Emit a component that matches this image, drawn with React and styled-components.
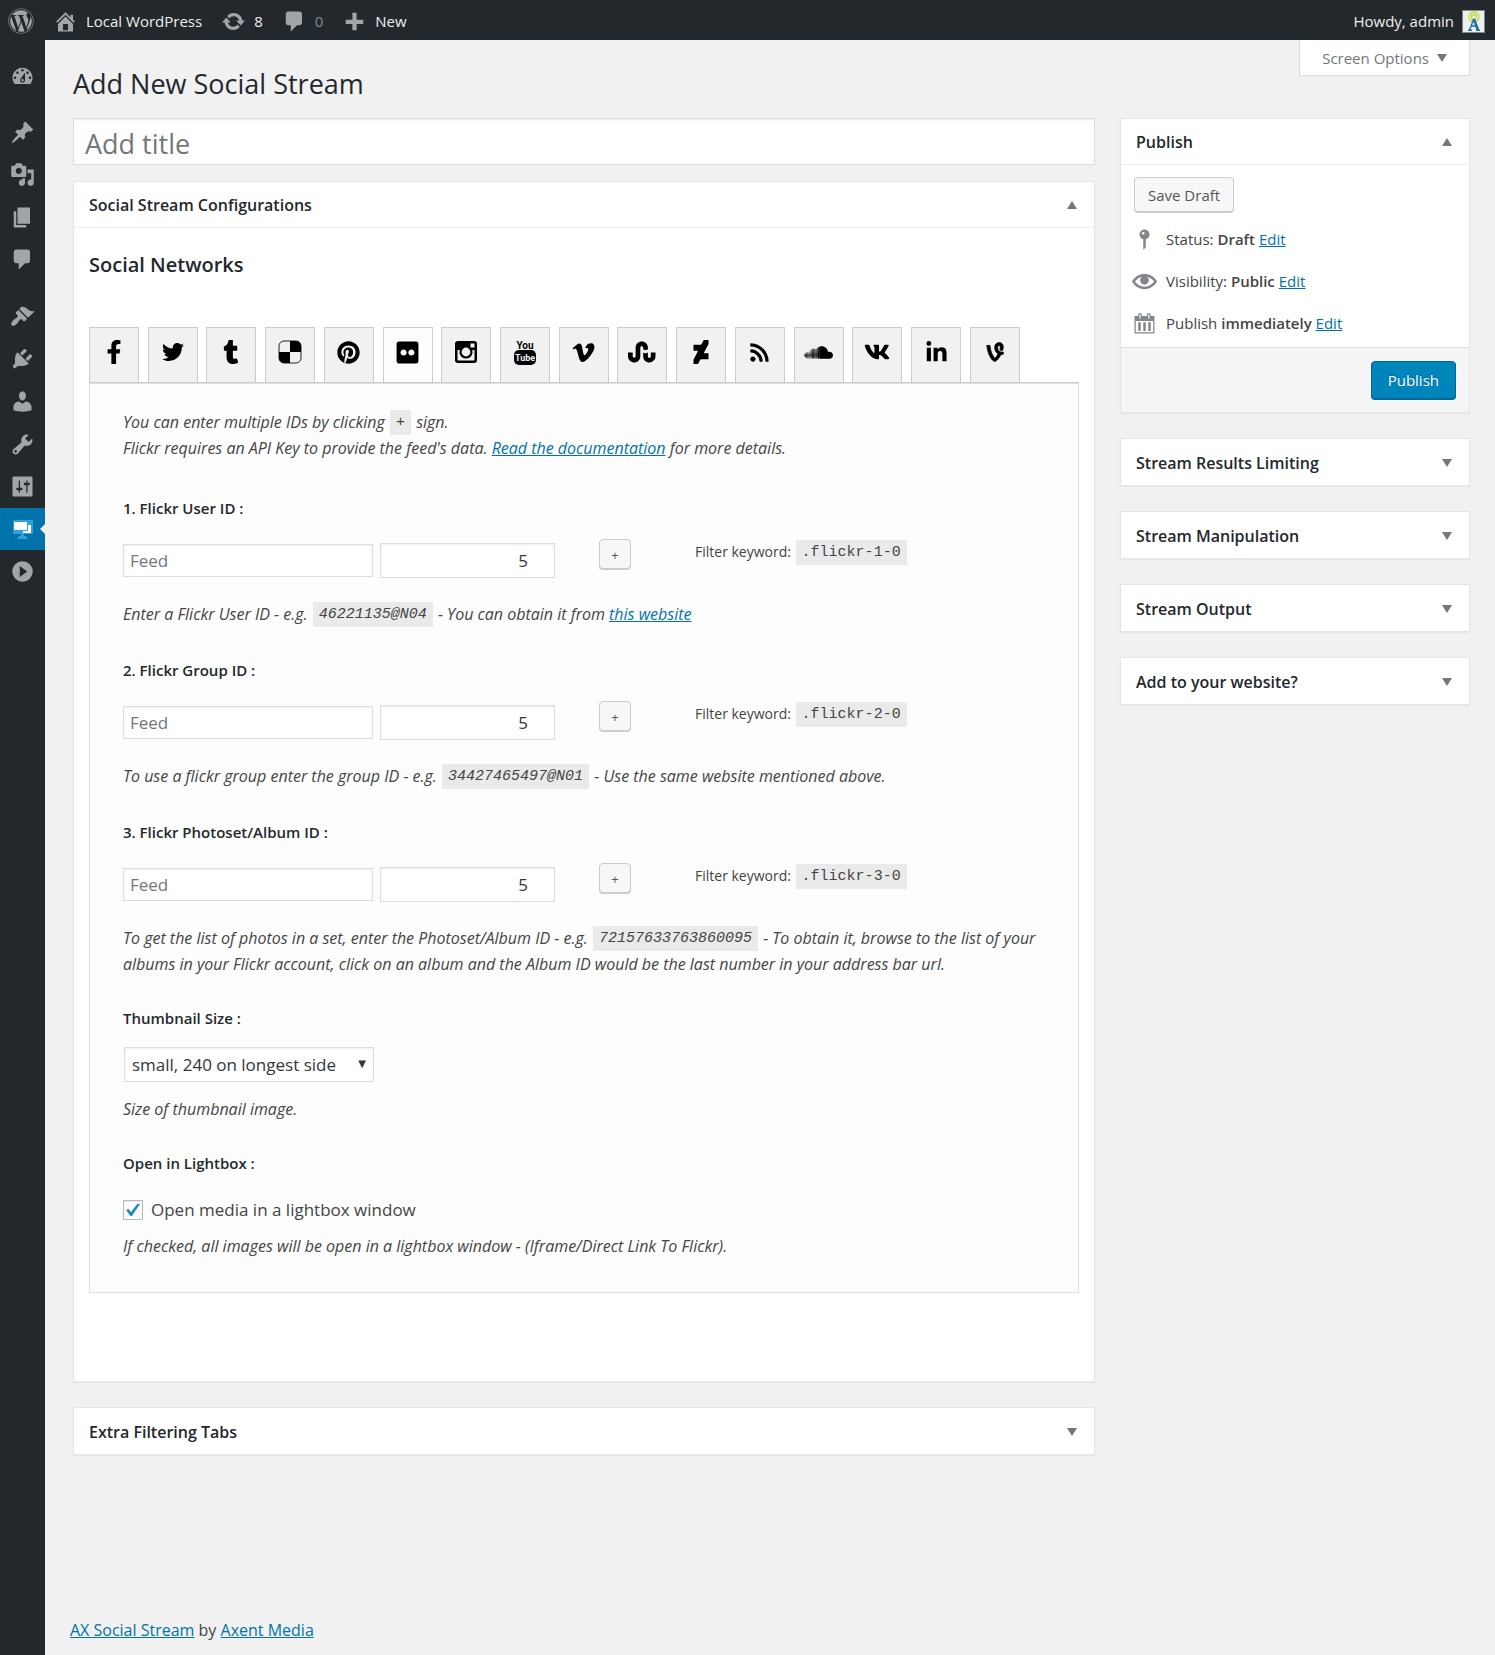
import React, { useState } from "react";
import styled, { createGlobalStyle } from "styled-components";
import {
  FaWordpress, FaFacebookF, FaTwitter, FaTumblr, FaPinterest, FaFlickr,
  FaVimeoV, FaStumbleupon, FaDeviantart, FaRss, FaSoundcloud, FaVk, FaLinkedinIn, FaVine
} from 'react-icons/fa'

const GlobalStyle = createGlobalStyle`
  * { box-sizing: border-box; }
  body {
    margin: 0;
    background: #f1f1f1;
    color: #444;
    font-family: "Open Sans", "Noto Sans", sans-serif;
    font-size: 15px;
    line-height: 26px;
  }
  button, input, select { font-family: inherit; margin: 0; }
  h1, h2, h3, h4, p, ul { margin: 0; padding: 0; }
  a { color: #0073aa; }
`

// dashicons, all on a 20x20 grid
const paths = {
  home: "M16 8.5l1.53 1.53-1.06 1.06L10 4.6l-6.47 6.49-1.06-1.06L10 2.5l4 4v-2h2v4zm-6-2.46l6 5.99V18H4v-5.97zM12 17v-5H8v5h4z",
  update: "M10.2 3.28c3.53 0 6.43 2.61 6.92 6h2.08l-3.5 4-3.5-4h2.32c-.45-1.97-2.21-3.45-4.32-3.45-1.45 0-2.73.71-3.54 1.78L4.95 5.66C6.23 4.2 8.11 3.28 10.2 3.28zm-.4 13.44c-3.52 0-6.43-2.61-6.92-6H.8l3.5-4c1.17 1.33 2.33 2.67 3.5 4H5.48c.45 1.97 2.21 3.45 4.32 3.45 1.45 0 2.73-.71 3.54-1.78l1.71 1.95c-1.28 1.46-3.15 2.38-5.25 2.38z",
  comments: "M5 2h9c1.1 0 2 .9 2 2v7c0 1.1-.9 2-2 2h-2l-5 5v-5H5c-1.1 0-2-.9-2-2V4c0-1.1.9-2 2-2z",
  plus: "M17 8.5v3.4h-5.3V17H8.3v-5.1H3V8.5h5.3V3h3.4v5.5z",
  dashboard: "M3.76 16h12.48c1.1-1.37 1.76-3.11 1.76-5 0-4.42-3.58-8-8-8s-8 3.58-8 8c0 1.89.66 3.63 1.76 5zM10 4c.55 0 1 .45 1 1s-.45 1-1 1-1-.45-1-1 .45-1 1-1zM6 6c.55 0 1 .45 1 1s-.45 1-1 1-1-.45-1-1 .45-1 1-1zm8 0c.55 0 1 .45 1 1s-.45 1-1 1-1-.45-1-1 .45-1 1-1zm-5.37 5.55L12 7v6c0 1.1-.9 2-2 2s-2-.9-2-2c0-.57.24-1.08.63-1.45zM4 10c.55 0 1 .45 1 1s-.45 1-1 1-1-.45-1-1 .45-1 1-1zm12 0c.55 0 1 .45 1 1s-.45 1-1 1-1-.45-1-1 .45-1 1-1zm-5 3c0-.55-.45-1-1-1s-1 .45-1 1 .45 1 1 1 1-.45 1-1z",
  post: "M10.44 3.02l1.82-1.82 6.36 6.35-1.83 1.82c-1.05-.68-2.48-.57-3.41.36l-.75.75c-.92.93-1.04 2.35-.35 3.41l-1.83 1.82-2.41-2.41-2.8 2.79c-.42.42-3.38 2.71-3.8 2.29s1.86-3.39 2.28-3.81l2.79-2.79L4.1 9.36l1.83-1.82c1.05.69 2.48.57 3.4-.36l.75-.75c.93-.92 1.05-2.35.36-3.41z",
  media: "M13 11V4c0-.55-.45-1-1-1h-1.67L9 1H5L3.67 3H2c-.55 0-1 .45-1 1v7c0 .55.45 1 1 1h10c.55 0 1-.45 1-1zM7 4.5c1.38 0 2.5 1.12 2.5 2.5S8.38 9.5 7 9.5 4.5 8.38 4.5 7 5.62 4.5 7 4.5zM14 6h5v10.5c0 1.38-1.12 2.5-2.5 2.5S14 17.88 14 16.5s1.12-2.5 2.5-2.5c.17 0 .34.02.5.05V9h-3V6zm-4 8.05V13h2v3.5c0 1.38-1.12 2.5-2.5 2.5S7 17.88 7 16.5 8.12 14 9.5 14c.17 0 .34.02.5.05z",
  page: "M6 15V2h10v13H6zm-1 1h8v2H3V5h2v11z",
  appearance: "M14.48 11.06L7.41 3.99l1.5-1.5c.5-.56 2.3-.47 3.51.32 1.21.8 1.43 1.28 2.91 2.1 1.18.64 2.45 1.26 4.45.85zm-.71.71L6.7 4.7 4.93 6.47c-.39.39-.39 1.02 0 1.41l1.06 1.06c.39.39.39 1.03 0 1.42-.6.6-1.43 1.11-2.21 1.69-.35.26-.7.53-1.01.84C1.43 14.23.4 16.08 1.4 17.07c.99 1 2.84-.03 4.18-1.36.31-.31.58-.66.85-1.02.57-.78 1.08-1.61 1.69-2.21.39-.39 1.02-.39 1.41 0l1.06 1.06c.39.39 1.02.39 1.41 0z",
  plugins: "M13.11 4.36L9.87 7.6 8 5.73l3.24-3.24c.35-.34 1.05-.2 1.56.32.52.51.66 1.21.31 1.55zm-8 1.77l.91-1.12 9.01 9.01-1.19.84c-.71.71-2.63 1.16-3.82 1.16H6.14L4.9 17.26c-.59.59-1.54.59-2.12 0-.59-.58-.59-1.53 0-2.12l1.24-1.24v-3.88c0-1.13.4-3.19 1.09-3.89zm7.26 3.97l3.24-3.24c.34-.35 1.04-.21 1.55.31.52.51.66 1.21.31 1.55l-3.24 3.25z",
  users: "M10 9.25c-2.27 0-2.73-3.44-2.73-3.44C7 4.02 7.82 2 9.97 2c2.16 0 2.98 2.02 2.71 3.81 0 0-.41 3.44-2.68 3.44zm0 2.57L12.72 10c2.39 0 4.52 2.33 4.52 4.53v2.49s-3.65 1.13-7.24 1.13c-3.65 0-7.24-1.13-7.24-1.13v-2.49c0-2.25 1.94-4.48 4.47-4.48z",
  tools: "M16.68 9.77c-1.34 1.34-3.3 1.67-4.95.99l-5.41 6.52c-.99.99-2.59.99-3.58 0s-.99-2.59 0-3.57l6.52-5.42c-.68-1.65-.35-3.61.99-4.95 1.28-1.28 3.12-1.62 4.72-1.06l-2.89 2.89 2.82 2.82 2.86-2.87c.53 1.58.18 3.39-1.08 4.65zM3.81 16.21c.4.39 1.04.39 1.43 0 .4-.4.4-1.04 0-1.43-.39-.4-1.03-.4-1.43 0-.39.39-.39 1.03 0 1.43z",
  settings: "M18 17V3c0-.55-.45-1-1-1H3c-.55 0-1 .45-1 1v14c0 .55.45 1 1 1h14c.55 0 1-.45 1-1zM8 11h1c.55 0 1 .45 1 1s-.45 1-1 1H8v1.5c0 .28-.22.5-.5.5s-.5-.22-.5-.5V13H6c-.55 0-1-.45-1-1s.45-1 1-1h1V5.5c0-.28.22-.5.5-.5s.5.22.5.5V11zm5-2h-1c-.55 0-1-.45-1-1s.45-1 1-1h1V5.5c0-.28.22-.5.5-.5s.5.22.5.5V7h1c.55 0 1 .45 1 1s-.45 1-1 1h-1v5.5c0 .28-.22.5-.5.5s-.5-.22-.5-.5V9z",
  collapse: "M10 1.8a8.2 8.2 0 100 16.4 8.2 8.2 0 000-16.4zM7.8 5.6l6 4.4-6 4.4z",
  status: "M14 6c0 1.86-1.28 3.41-3 3.86V16c0 1-2 2-2 2V9.86c-1.72-.45-3-2-3-3.86 0-2.21 1.79-4 4-4s4 1.79 4 4zM8 5c0 .55.45 1 1 1s1-.45 1-1-.45-1-1-1-1 .45-1 1z",
  visibility: "M19.7 9.4C17.7 6 14 3.9 10 3.9S2.3 6 .3 9.4L0 10l.3.6c2 3.4 5.7 5.5 9.7 5.5s7.7-2.1 9.7-5.5l.3-.6-.3-.6zM10 14.1c-3.1 0-6-1.6-7.7-4.1C3.6 8 5.7 6.6 8 6.1c-.9.6-1.5 1.7-1.5 2.9 0 1.9 1.6 3.5 3.5 3.5s3.5-1.6 3.5-3.5c0-1.2-.6-2.3-1.5-2.9 2.3.5 4.4 1.9 5.7 3.9-1.7 2.5-4.6 4.1-7.7 4.1z",
  calendar: "M15 4h3v14H2V4h3V3c0-.83.67-1.5 1.5-1.5S8 2.17 8 3v1h4V3c0-.83.67-1.5 1.5-1.5S15 2.17 15 3v1zM6 3v2.5c0 .28.22.5.5.5s.5-.22.5-.5V3c0-.28-.22-.5-.5-.5S6 2.72 6 3zm7 0v2.5c0 .28.22.5.5.5s.5-.22.5-.5V3c0-.28-.22-.5-.5-.5s-.5.22-.5.5zm4 14V8H3v9h14zM7 16V9H5v7h2zm4 0V9H9v7h2zm4 0V9h-2v7h2z",
}

function Dashicon({ name, size = 25 }) {
  return (
    <svg width={size} height={size} viewBox="0 0 20 20" fill="currentColor" fillRule="evenodd" aria-hidden="true">
      <path d={paths[name]} />
    </svg>
  )
}

const StreamIcon = () => (
  <svg width="21" height="21" viewBox="0 0 21 21" aria-hidden="true">
    <rect x="1" y="1" width="20" height="14" rx="1" fill="#2ea2dc" />
    <path d="M7 17h7l2 3H5zM9 14h3v4H9z" fill="#2ea2dc" />
    <path d="M2 3h13v8H2zM16 6h3v8h-8v-2h5z" fill="#fff" />
  </svg>
)

const DeliciousIcon = () => (
  <svg width="24" height="24" viewBox="0 0 24 24" aria-hidden="true">
    <rect x="1" y="1" width="22" height="22" rx="5" fill="none" stroke="#222" />
    <path d="M12 1h6a5 5 0 015 5v6H12zM1 12h11v11H6a5 5 0 01-5-5z" fill="#000" />
  </svg>
)

const InstagramIcon = () => (
  <svg width="24" height="24" viewBox="0 0 24 24" fill="currentColor" fillRule="evenodd" aria-hidden="true">
    <path d="M4 1h16a3 3 0 013 3v16a3 3 0 01-3 3H4a3 3 0 01-3-3V4a3 3 0 013-3zM16.5 3.5v4h4v-4zM3.5 10v9.5a1 1 0 001 1h15a1 1 0 001-1V10h-2.2a6.6 6.6 0 11-12.6 0zM12 7.6a4.4 4.4 0 100 8.8 4.4 4.4 0 000-8.8z" />
  </svg>
)

const YoutubeIcon = () => (
  <svg width="24" height="28" viewBox="0 0 24 28" fontFamily="Roboto, sans-serif" fontWeight="700" textAnchor="middle" aria-hidden="true">
    <text x="12" y="11" fontSize="10" fill="#000">You</text>
    <rect x="1" y="12" width="22" height="15" rx="5" fill="#000" />
    <text x="12" y="23" fontSize="9" fill="#eee">Tube</text>
  </svg>
)

const AvatarIcon = () => (
  <svg width="21" height="21" viewBox="0 0 21 21" fill="none" aria-hidden="true">
    <circle cx="11" cy="6" r="5" stroke="#b8dc3a" strokeWidth="1.3" />
    <circle cx="11" cy="6" r="2.5" stroke="#b8dc3a" strokeWidth="1.3" />
    <path d="M10.8 8L6.5 19M8 15h6M5 19.3h4M13 19.3h4" stroke="#1d6fa8" strokeWidth="1.4" />
    <path d="M10.8 8L15 19" stroke="#1d6fa8" strokeWidth="2.6" />
  </svg>
)

const networks = [
  { name: "Facebook", icon: <FaFacebookF size={24} /> },
  { name: "Twitter", icon: <FaTwitter size={22} /> },
  { name: "Tumblr", icon: <FaTumblr size={24} /> },
  { name: "Delicious", icon: <DeliciousIcon /> },
  { name: "Pinterest", icon: <FaPinterest size={23} /> },
  { name: "Flickr", icon: <FaFlickr size={25} /> },
  { name: "Instagram", icon: <InstagramIcon /> },
  { name: "YouTube", icon: <YoutubeIcon /> },
  { name: "Vimeo", icon: <FaVimeoV size={25} /> },
  { name: "StumbleUpon", icon: <FaStumbleupon size={28} /> },
  { name: "DeviantArt", icon: <FaDeviantart size={24} /> },
  { name: "RSS", icon: <FaRss size={21} /> },
  { name: "SoundCloud", icon: <FaSoundcloud size={29} /> },
  { name: "VK", icon: <FaVk size={26} /> },
  { name: "LinkedIn", icon: <FaLinkedinIn size={23} /> },
  { name: "Vine", icon: <FaVine size={22} stroke="#000" strokeWidth={18} /> },
]

const AdminBar = styled.header`
  display: flex;
  justify-content: space-between;
  align-items: center;
  height: 40px;
  padding: 2px 10px 0 8px;
  background: #23282d;
  color: #eee;
`

const BarGroup = styled.nav`
  display: flex;
  align-items: center;
  gap: 19px;
`

const BarLink = styled.a`
  display: flex;
  align-items: center;
  gap: 8px;
  color: ${props => props.$muted ? "#82878c" : "#eee"};
  text-decoration: none;
  svg { color: #a0a5aa; }
`

const Avatar = styled.span`
  display: flex;
  width: 23px;
  height: 23px;
  border: 1px solid #82878c;
  background: #eee;
`

const Shell = styled.div`
  display: flex;
  min-height: calc(100vh - 40px);
`

const Menu = styled.nav`
  flex: 0 0 45px;
  padding-top: 15px;
  background: #23282d;
`

const MenuGroup = styled.div`
  display: flex;
  flex-direction: column;
  height: ${props => props.$height};
  margin-bottom: 14px;
`

const MenuLink = styled.a`
  position: relative;
  flex: 1;
  display: flex;
  align-items: center;
  justify-content: center;
  color: ${props => props.$active ? "#fff" : "#a0a5aa"};
  background: ${props => props.$active ? "#0073aa" : "transparent"};
  &::after {
    content: "";
    display: ${props => props.$active ? "block" : "none"};
    position: absolute;
    right: 0;
    border: 5px solid transparent;
    border-right-color: #f1f1f1;
    border-left: 0;
  }
`

const Content = styled.main`
  flex: 1;
  min-width: 0;
  display: flex;
  flex-direction: column;
  padding: 0 25px 12px 28px;
`

const TopRow = styled.div`
  display: flex;
  justify-content: space-between;
  align-items: flex-start;
  height: 78px;
`

const PageTitle = styled.h1`
  padding-top: 26px;
  font-size: 27px;
  font-weight: 400;
  line-height: 36px;
  color: #23282d;
`

const ScreenOptions = styled.button`
  display: flex;
  align-items: center;
  gap: 8px;
  height: 36px;
  padding: 0 22px;
  border: 1px solid #ddd;
  border-top: 0;
  background: #fff;
  color: #72777c;
  font-size: 15px;
`

const Columns = styled.div`
  display: grid;
  grid-template-columns: minmax(0, 1fr) 350px;
  align-items: start;
  gap: 25px;
`

const Column = styled.div`
  display: flex;
  flex-direction: column;
  gap: 25px;
`

const TitleInput = styled.input`
  width: 100%;
  height: 47px;
  margin-bottom: -9px;
  padding: 3px 11px 0;
  border: 1px solid #ddd;
  box-shadow: inset 0 1px 2px rgba(0,0,0,.07);
  font-size: 27px;
  color: #32373c;
  &::placeholder { color: #72777c; }
`

const Box = styled.section`
  background: #fff;
  border: 1px solid #e5e5e5;
  box-shadow: 0 1px 1px rgba(0,0,0,.04);
`

const BoxHeader = styled.div`
  display: flex;
  justify-content: space-between;
  align-items: center;
  height: 46px;
  padding: 1px 15px 0;
  border-bottom: ${props => props.$open ? "1px solid #eee" : "0"};
`

const BoxTitle = styled.h2`
  font-size: 16px;
  font-weight: 600;
  color: #23282d;
`

const Toggle = styled.button`
  padding: 0 2px;
  border: 0;
  background: none;
  display: flex;
`

const Triangle = styled.span`
  border: 5px solid transparent;
  border-top: ${props => props.$up ? "0" : "8px solid #72777c"};
  border-bottom: ${props => props.$up ? "8px solid #72777c" : "0"};
`

const BoxBody = styled.div`
  padding: 23px 15px 88px;
`

const SectionTitle = styled.h3`
  font-size: 20px;
  font-weight: 600;
  line-height: 28px;
  color: #23282d;
  margin-bottom: 48px;
`

const Tabs = styled.div`
  display: flex;
  justify-content: space-between;
  padding-right: 59px;
  border-bottom: 1px solid #ccc;
`

const Tab = styled.button`
  display: flex;
  align-items: center;
  justify-content: center;
  width: 50px;
  height: 55px;
  padding: 0 0 6px;
  border: 1px solid #ccc;
  border-bottom: 0;
  background: ${props => props.$active ? "#fdfdfd" : "#f1f1f1"};
  color: #000;
`

const Panel = styled.div`
  padding: 25px 33px 33px;
  border: 1px solid #dfdfdf;
  background: #fdfdfd;
`

const Note = styled.p`
  font-style: italic;
  font-size: 16px;
`

const Intro = styled(Note)`
  padding-bottom: 4px;
`

const Code = styled.code`
  display: inline-block;
  height: 25px;
  line-height: 25px;
  padding: 0 6px;
  margin: 0 1px;
  background: #eaeaea;
  font-family: "Liberation Mono", monospace;
  font-size: 15px;
  vertical-align: bottom;
`

const Field = styled.div`
  margin-top: ${props => props.$option ? "28px" : "30px"};
`

const FieldLabel = styled.label`
  display: block;
  font-size: 15px;
  font-weight: 600;
  color: #23282d;
`

const FieldRow = styled.div`
  display: flex;
  align-items: flex-start;
  height: 39px;
  margin: 18px 0 23px;
`

const Inputs = styled.div`
  display: flex;
  align-items: center;
  align-self: flex-end;
  gap: 7px;
`

const Input = styled.input`
  width: 250px;
  height: 33px;
  padding: 0 6px;
  border: 1px solid #ddd;
  background: #fff;
  box-shadow: inset 0 1px 2px rgba(0,0,0,.07);
  color: #32373c;
  font-size: 17px;
  &::placeholder { color: #72777c; }
`

const NumberInput = styled(Input)`
  width: 175px;
  height: 35px;
  padding-right: 26px;
  text-align: right;
  appearance: textfield;
  &::-webkit-inner-spin-button { appearance: none; }
`

const Button = styled.button`
  height: ${props => props.$small ? "30px" : "35px"};
  padding: 2px ${props => props.$small ? "11px" : "13px"} 0;
  border: 1px solid #ccc;
  border-radius: 4px;
  background: #f7f7f7;
  box-shadow: 0 1px 0 #ccc;
  color: #555;
  font-size: ${props => props.$small ? "13px" : "15px"};
  line-height: 1;
`

const AddButton = styled(Button)`
  width: 32px;
  margin: 0 64px 0 44px;
`

const PrimaryButton = styled(Button)`
  height: 38px;
  padding: 0 16px;
  border-color: #006799;
  background: #0085ba;
  box-shadow: 0 1px 0 #006799;
  color: #fff;
  text-shadow: 0 -1px 1px #006799;
`

const Filter = styled.div`
  font-size: 14px;
`

const SelectWrap = styled.div`
  position: relative;
  width: 250px;
  margin: 16px 0 14px 1px;
  &::after {
    content: "▼";
    position: absolute;
    right: 8px;
    top: 4px;
    font-family: "DejaVu Sans", sans-serif;
    font-size: 10px;
    color: #32373c;
    pointer-events: none;
  }
`

const Select = styled.select`
  display: block;
  width: 100%;
  height: 35px;
  padding: 0 7px;
  appearance: none;
  border: 1px solid #ddd;
  border-radius: 0;
  background: #fff;
  box-shadow: inset 0 1px 2px rgba(0,0,0,.07);
  color: #32373c;
  font-size: 17px;
`

const CheckLabel = styled.label`
  display: flex;
  align-items: center;
  gap: 8px;
  margin: 21px 0 10px;
  font-size: 17px;
`

const Checkbox = styled.input`
  appearance: none;
  display: flex;
  width: 20px;
  height: 20px;
  border: 1px solid #b4b9be;
  background: #fff;
  box-shadow: inset 0 1px 2px rgba(0,0,0,.1);
  &:checked::before {
    content: "";
    flex: 1;
    margin: 3px 2px;
    background: #1e8cbe;
    clip-path: polygon(0 50%, 18% 42%, 36% 66%, 80% 0, 100% 0, 42% 100%, 32% 100%);
  }
`

const PublishBody = styled.div`
  padding: 12px 13px 11px;
`

const StatusList = styled.ul`
  display: flex;
  flex-direction: column;
  gap: 16px;
  margin-top: 14px;
  list-style: none;
  li {
    display: flex;
    align-items: center;
    gap: 9px;
  }
  svg { color: #82878c; margin-left: -2px; }
  strong { font-weight: 600; }
`

const PublishFooter = styled.div`
  display: flex;
  justify-content: flex-end;
  padding: 13px;
  border-top: 1px solid #ddd;
  background: #f5f5f5;
`

const Footer = styled.footer`
  margin-top: auto;
  margin-left: -3px;
  font-size: 16px;
`

function PostBox({ title, defaultOpen = false, children }) {
  const [open, setOpen] = useState(defaultOpen)
  return (
    <Box>
      <BoxHeader $open={open}>
        <BoxTitle>{title}</BoxTitle>
        <Toggle type="button" aria-label={title} aria-expanded={open} onClick={() => setOpen(!open)}>
          <Triangle $up={open} />
        </Toggle>
      </BoxHeader>
      {open && children}
    </Box>
  )
}

function FeedField({ index, label, children }) {
  return (
    <Field>
      <FieldLabel htmlFor={"feed-" + index}>{index}. {label} :</FieldLabel>
      <FieldRow>
        <Inputs>
          <Input id={"feed-" + index} placeholder="Feed" />
          <NumberInput type="number" aria-label={label + " results"} defaultValue={5} />
        </Inputs>
        <AddButton type="button" $small>+</AddButton>
        <Filter>Filter keyword: <Code>.flickr-{index}-0</Code></Filter>
      </FieldRow>
      <Note>{children}</Note>
    </Field>
  )
}

export default function App() {
  const [tab, setTab] = useState("Flickr")

  return (
    <>
      <GlobalStyle />
      <AdminBar>
        <BarGroup>
          <BarLink href="#" aria-label="About WordPress"><FaWordpress size={26} /></BarLink>
          <BarLink href="#"><Dashicon name="home" />Local WordPress</BarLink>
          <BarLink href="#"><Dashicon name="update" />8</BarLink>
          <BarLink href="#" $muted><Dashicon name="comments" />0</BarLink>
          <BarLink href="#"><Dashicon name="plus" />New</BarLink>
        </BarGroup>
        <BarLink href="#">Howdy, admin<Avatar><AvatarIcon /></Avatar></BarLink>
      </AdminBar>
      <Shell>
        <Menu>
          <MenuGroup $height="42px">
            <MenuLink href="#" aria-label="Dashboard"><Dashicon name="dashboard" /></MenuLink>
          </MenuGroup>
          <MenuGroup $height="170px">
            {["post", "media", "page", "comments"].map(name => (
              <MenuLink key={name} href="#" aria-label={name}><Dashicon name={name} /></MenuLink>
            ))}
          </MenuGroup>
          <MenuGroup $height="298px">
            {["appearance", "plugins", "users", "tools", "settings"].map(name => (
              <MenuLink key={name} href="#" aria-label={name}><Dashicon name={name} /></MenuLink>
            ))}
            <MenuLink href="#" aria-label="Social Stream" $active><StreamIcon /></MenuLink>
            <MenuLink href="#" aria-label="Collapse menu"><Dashicon name="collapse" /></MenuLink>
          </MenuGroup>
        </Menu>
        <Content>
          <TopRow>
            <PageTitle>Add New Social Stream</PageTitle>
            <ScreenOptions type="button">Screen Options <Triangle /></ScreenOptions>
          </TopRow>
          <Columns>
            <Column>
              <TitleInput placeholder="Add title" aria-label="Add title" />
              <PostBox title="Social Stream Configurations" defaultOpen>
                <BoxBody>
                  <SectionTitle>Social Networks</SectionTitle>
                  <Tabs role="tablist">
                    {networks.map(n => (
                      <Tab key={n.name} type="button" role="tab" aria-label={n.name}
                        aria-selected={tab === n.name} $active={tab === n.name} onClick={() => setTab(n.name)}>
                        {n.icon}
                      </Tab>
                    ))}
                  </Tabs>
                  <Panel>
                    <Intro>
                      You can enter multiple IDs by clicking <Code>+</Code> sign.<br />
                      Flickr requires an API Key to provide the feed's data. <a href="#">Read the documentation</a> for more details.
                    </Intro>
                    <FeedField index={1} label="Flickr User ID">
                      Enter a Flickr User ID - e.g. <Code>46221135@N04</Code> - You can obtain it from <a href="#">this website</a>
                    </FeedField>
                    <FeedField index={2} label="Flickr Group ID">
                      To use a flickr group enter the group ID - e.g. <Code>34427465497@N01</Code> - Use the same website mentioned above.
                    </FeedField>
                    <FeedField index={3} label="Flickr Photoset/Album ID">
                      To get the list of photos in a set, enter the Photoset/Album ID - e.g. <Code>72157633763860095</Code> - To obtain it, browse to the list of your albums in your Flickr account, click on an album and the Album ID would be the last number in your address bar url.
                    </FeedField>
                    <Field $option>
                      <FieldLabel htmlFor="thumb">Thumbnail Size :</FieldLabel>
                      <SelectWrap>
                        <Select id="thumb">
                          <option>small, 240 on longest side</option>
                        </Select>
                      </SelectWrap>
                      <Note>Size of thumbnail image.</Note>
                    </Field>
                    <Field $option>
                      <FieldLabel as="h4">Open in Lightbox :</FieldLabel>
                      <CheckLabel>
                        <Checkbox type="checkbox" defaultChecked />
                        Open media in a lightbox window
                      </CheckLabel>
                      <Note>If checked, all images will be open in a lightbox window - (Iframe/Direct Link To Flickr).</Note>
                    </Field>
                  </Panel>
                </BoxBody>
              </PostBox>
              <PostBox title="Extra Filtering Tabs" />
            </Column>
            <Column>
              <PostBox title="Publish" defaultOpen>
                <PublishBody>
                  <Button type="button">Save Draft</Button>
                  <StatusList>
                    <li><Dashicon name="status" /><span>Status: <strong>Draft</strong> <a href="#">Edit</a></span></li>
                    <li><Dashicon name="visibility" /><span>Visibility: <strong>Public</strong> <a href="#">Edit</a></span></li>
                    <li><Dashicon name="calendar" /><span>Publish <strong>immediately</strong> <a href="#">Edit</a></span></li>
                  </StatusList>
                </PublishBody>
                <PublishFooter>
                  <PrimaryButton type="button">Publish</PrimaryButton>
                </PublishFooter>
              </PostBox>
              <PostBox title="Stream Results Limiting" />
              <PostBox title="Stream Manipulation" />
              <PostBox title="Stream Output" />
              <PostBox title="Add to your website?" />
            </Column>
          </Columns>
          <Footer><a href="#">AX Social Stream</a> by <a href="#">Axent Media</a></Footer>
        </Content>
      </Shell>
    </>
  )
}
